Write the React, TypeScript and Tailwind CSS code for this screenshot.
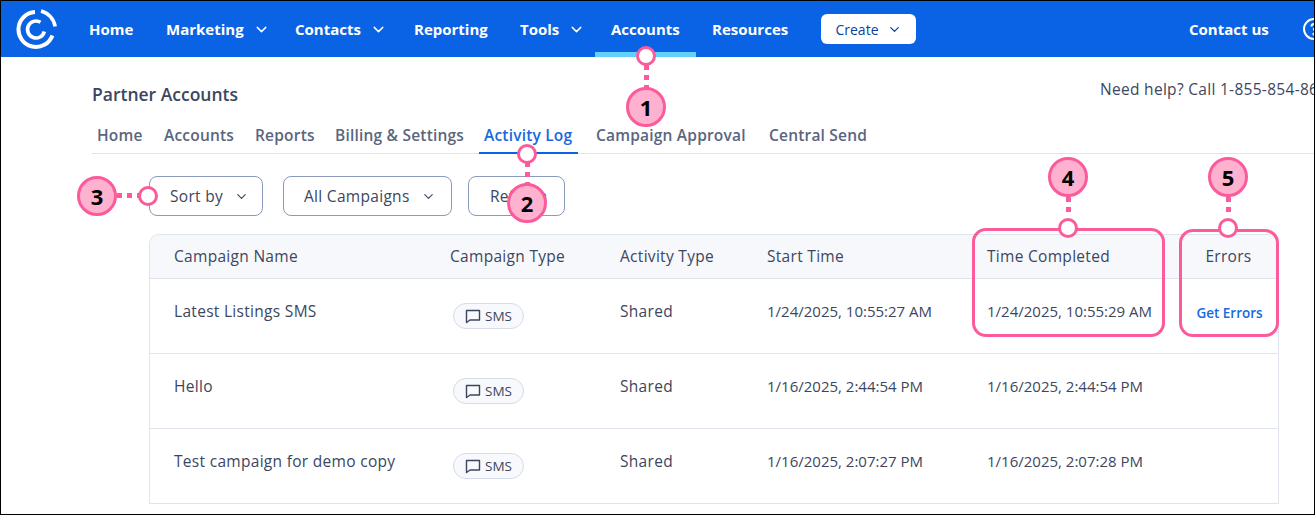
import { ChevronDown } from "lucide-react";

const font = { fontFamily: "'Open Sans', sans-serif" };

const navItems = [
  { label: "Home", w: "w-[77px]" },
  { label: "Marketing", w: "w-[129px]", chev: true },
  { label: "Contacts", w: "w-[119px]", chev: true },
  { label: "Reporting", w: "w-[106px]" },
  { label: "Tools", w: "w-[91px]", chev: true },
  { label: "Accounts", w: "w-[101px]", active: true },
  { label: "Resources", w: "w-[109px]" },
];

const subTabs = [
  { label: "Home", w: "w-[55px]" },
  { label: "Accounts", w: "w-[79px]" },
  { label: "Reports", w: "w-[68px]" },
  { label: "Billing & Settings", w: "w-[137px]" },
  { label: "Activity Log", w: "w-[99px] mr-[1px]", active: true },
  { label: "Campaign Approval", w: "w-[161px]" },
  { label: "Central Send", w: "w-[110px]" },
];

const rows = [
  { name: "Latest Listings SMS", start: "1/24/2025, 10:55:27 AM", end: "1/24/2025, 10:55:29 AM", err: true },
  { name: "Hello", start: "1/16/2025, 2:44:54 PM", end: "1/16/2025, 2:44:54 PM" },
  { name: "Test campaign for demo copy", start: "1/16/2025, 2:07:27 PM", end: "1/16/2025, 2:07:28 PM" },
];

const cols = "grid grid-cols-[276px_170px_147px_220px_216px_99px]";
const label = "text-[15.5px] tracking-[0.3px]";

function Logo() {
  return (
    <svg width="42" height="42" viewBox="0 0 42 42" fill="none" stroke="white" strokeWidth="4" className="shrink-0">
      <path d="M20 4 A17.5 17.5 0 1 0 37.4 27.5" />
      <path d="M26 3 A19.3 19.3 0 0 1 40.2 18.5" strokeWidth="3.6" />
      <path d="M25.5 14.3 A8.5 8.5 0 1 0 29.3 23.5" strokeWidth="3.6" />
    </svg>
  );
}

function Sms() {
  return (
    <span className="ml-[3px] mt-[24px] inline-flex h-[26px] w-[71px] items-center justify-center gap-[4px] rounded-full border border-[#d5dbe8] bg-[#f8f9fc] text-[13.5px] text-[#3c4660]">
      <svg width="16" height="16" viewBox="0 0 16 16" fill="none" stroke="#3c4660" strokeWidth="1.4">
        <path d="M1.5 2.5 H14.5 V12 H5 L1.5 14.5 Z" strokeLinejoin="round" />
      </svg>
      SMS
    </span>
  );
}

function Marker({ n, pos }: { n: number; pos: string }) {
  return (
    <div className={`absolute flex h-[40px] w-[40px] items-center justify-center rounded-full border-[3px] border-[#fb5b9b] bg-[#ffb1d0] text-[22px] font-bold text-black ${pos}`}>
      {n}
    </div>
  );
}

function Dot({ pos }: { pos: string }) {
  return <div className={`absolute h-[20px] w-[20px] rounded-full border-[3px] border-[#fb5b9b] bg-white ${pos}`} />;
}

function Dash({ pos, count, row }: { pos: string; count: number; row?: boolean }) {
  return (
    <div className={`absolute flex gap-[5px] ${row ? "flex-row" : "flex-col"} ${pos}`}>
      {Array.from({ length: count }).map((_, i) => (
        <span key={i} className="block h-[5px] w-[5px] bg-[#fb5b9b]" />
      ))}
    </div>
  );
}

export default function App() {
  return (
    <div style={font} className="relative h-[515px] w-[1315px] overflow-hidden border border-black bg-white text-[15px] text-[#3c4660]">
      <header className="flex h-[56px] items-center bg-[#0a62e4] pl-[14px] text-[15px] font-bold text-white">
        <Logo />
        <nav className="ml-[16px] flex h-full shrink-0 items-center">
          {navItems.map((item) => (
            <div
              key={item.label}
              className={`flex h-full shrink-0 items-center whitespace-nowrap px-[16px] pt-[1px] ${item.w} ${item.active ? "border-b-[5px] border-[#62d0fb] pt-[6px]" : ""}`}
            >
              {item.label}
              {item.chev && <ChevronDown className="ml-[9px] h-[17px] w-[17px] shrink-0" strokeWidth={2} />}
            </div>
          ))}
        </nav>
        <button className="ml-[16px] flex h-[30px] w-[95px] shrink-0 items-center justify-center gap-[8px] rounded-[6px] bg-white text-[14px] font-normal text-[#0b3f9e]">
          Create
          <ChevronDown className="h-[15px] w-[15px]" strokeWidth={2} />
        </button>
        <span className="ml-[273px] shrink-0 whitespace-nowrap pt-[1px]">Contact us</span>
        <svg width="24" height="24" viewBox="0 0 24 24" fill="none" stroke="white" strokeWidth="2" className="ml-[33px] shrink-0">
          <circle cx="12" cy="12" r="10" />
          <path d="M9.5 9.5 A2.5 2.5 0 1 1 12 12 V13.5" />
          <circle cx="12" cy="17" r="0.6" fill="white" />
        </svg>
      </header>

      <div className="ml-[91px] flex h-[67px] items-start">
        <h1 className="mt-[25px] w-[1008px] shrink-0 whitespace-nowrap text-[17.5px] font-semibold leading-[24px] text-[#3c4660]">Partner Accounts</h1>
        <div className="mt-[20px] shrink-0 whitespace-nowrap text-[15.5px] leading-[24px] tracking-[0.3px]">Need help? Call 1-855-854-8609</div>
      </div>

      <div className="ml-[91px] flex h-[30px] items-start gap-[12px] border-b border-[#dfe3ec]">
        {subTabs.map((t) => (
          <div
            key={t.label}
            className={`h-[30px] shrink-0 whitespace-nowrap px-[5px] text-[15.5px] font-semibold leading-[22px] tracking-[0.2px] ${t.w} ${t.active ? "border-b-2 border-[#0a62e4] text-[#1868e0]" : "text-[#5a6580]"}`}
          >
            {t.label}
          </div>
        ))}
      </div>

      <div className={`ml-[148px] mt-[22px] flex gap-[20px] ${label}`}>
        <button className="flex h-[40px] w-[114px] items-center gap-[11px] rounded-[8px] border border-[#8a9bbb] pl-[20px] pt-[1px]">
          Sort by <ChevronDown className="h-[15px] w-[15px]" strokeWidth={1.8} />
        </button>
        <button className="flex h-[40px] w-[169px] items-center gap-[11px] rounded-[8px] border border-[#8a9bbb] pl-[20px] pt-[1px]">
          All Campaigns <ChevronDown className="h-[15px] w-[15px]" strokeWidth={1.8} />
        </button>
        <button className="-ml-[4px] flex h-[40px] w-[97px] items-center rounded-[8px] border border-[#8a9bbb] pl-[21px] pt-[1px]">
          Refresh
        </button>
      </div>

      <div className="ml-[148px] mt-[18px] w-[1130px] rounded-t-[10px] border-x border-t border-[#dfe3ec]">
        <div className={`${cols} ${label} h-[44px] items-center rounded-t-[10px] border-b border-[#dfe3ec] bg-[#f6f8fc] pt-[1px]`}>
          <div className="pl-[24px]">Campaign Name</div>
          <div className="pl-[24px]">Campaign Type</div>
          <div className="pl-[24px]">Activity Type</div>
          <div className="pl-[24px]">Start Time</div>
          <div className="pl-[24px]">Time Completed</div>
          <div className="text-center">Errors</div>
        </div>
        {rows.map((r) => (
          <div key={r.name} className={`${cols} h-[75px] border-b border-[#dfe3ec]`}>
            <div className={`pl-[24px] pt-[20px] leading-[24px] ${label}`}>{r.name}</div>
            <div className="pl-[24px]"><Sms /></div>
            <div className={`pl-[24px] pt-[20px] leading-[24px] ${label}`}>Shared</div>
            <div className="pl-[24px] pt-[20px] leading-[24px]">{r.start}</div>
            <div className="pl-[24px] pt-[20px] leading-[24px]">{r.end}</div>
            <div className="pt-[22px] pl-[2px] text-center text-[13.5px] font-semibold leading-[24px] text-[#1868e0]">{r.err ? "Get Errors" : ""}</div>
          </div>
        ))}
      </div>

      {/* Annotations */}
      <div className="absolute left-[971px] top-[227px] h-[109px] w-[193px] rounded-[14px] border-[3px] border-[#fb5b9b]" />
      <div className="absolute left-[1178px] top-[228px] h-[108px] w-[100px] rounded-[14px] border-[3px] border-[#fb5b9b]" />

      <Dash pos="left-[643px] top-[64px]" count={3} />
      <Dash pos="left-[524px] top-[161px]" count={3} />
      <Dash pos="left-[116px] top-[192px]" count={3} row />
      <Dash pos="left-[1065px] top-[196px]" count={2} />
      <Dash pos="left-[1225px] top-[196px]" count={2} />

      <Dot pos="left-[635px] top-[45px]" />
      <Dot pos="left-[516px] top-[143px]" />
      <Dot pos="left-[137px] top-[185px]" />
      <Dot pos="left-[1057px] top-[217px]" />
      <Dot pos="left-[1217px] top-[217px]" />

      <Marker n={1} pos="left-[625px] top-[86px]" />
      <Marker n={2} pos="left-[506px] top-[182px]" />
      <Marker n={3} pos="left-[76px] top-[175px]" />
      <Marker n={4} pos="left-[1047px] top-[156px]" />
      <Marker n={5} pos="left-[1207px] top-[156px]" />
    </div>
  );
}
